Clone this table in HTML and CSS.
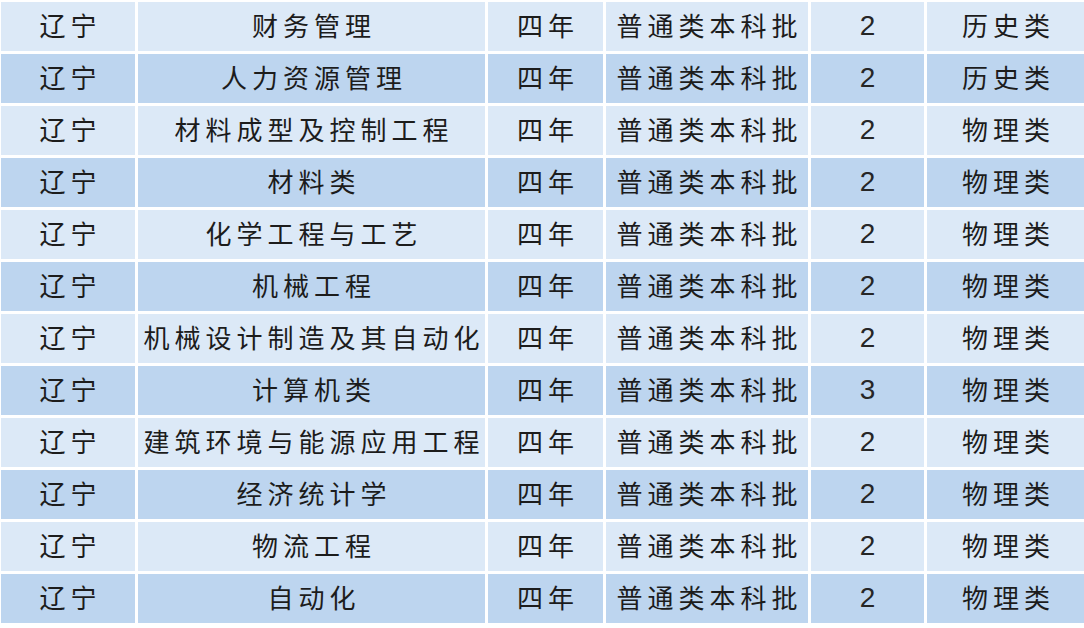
FILE: index.html
```html
<!DOCTYPE html>
<html lang="zh-CN">
<head>
<meta charset="utf-8">
<title>专业表</title>
<link rel="stylesheet" href="styles.css">
</head>
<body>
<div class="table">
  <div class="row light"><div class="cell">辽宁</div><div class="cell">财务管理</div><div class="cell">四年</div><div class="cell">普通类本科批</div><div class="cell num">2</div><div class="cell">历史类</div></div>
  <div class="row dark"><div class="cell">辽宁</div><div class="cell">人力资源管理</div><div class="cell">四年</div><div class="cell">普通类本科批</div><div class="cell num">2</div><div class="cell">历史类</div></div>
  <div class="row light"><div class="cell">辽宁</div><div class="cell">材料成型及控制工程</div><div class="cell">四年</div><div class="cell">普通类本科批</div><div class="cell num">2</div><div class="cell">物理类</div></div>
  <div class="row dark"><div class="cell">辽宁</div><div class="cell">材料类</div><div class="cell">四年</div><div class="cell">普通类本科批</div><div class="cell num">2</div><div class="cell">物理类</div></div>
  <div class="row light"><div class="cell">辽宁</div><div class="cell">化学工程与工艺</div><div class="cell">四年</div><div class="cell">普通类本科批</div><div class="cell num">2</div><div class="cell">物理类</div></div>
  <div class="row dark"><div class="cell">辽宁</div><div class="cell">机械工程</div><div class="cell">四年</div><div class="cell">普通类本科批</div><div class="cell num">2</div><div class="cell">物理类</div></div>
  <div class="row light"><div class="cell">辽宁</div><div class="cell">机械设计制造及其自动化</div><div class="cell">四年</div><div class="cell">普通类本科批</div><div class="cell num">2</div><div class="cell">物理类</div></div>
  <div class="row dark"><div class="cell">辽宁</div><div class="cell">计算机类</div><div class="cell">四年</div><div class="cell">普通类本科批</div><div class="cell num">3</div><div class="cell">物理类</div></div>
  <div class="row light"><div class="cell">辽宁</div><div class="cell">建筑环境与能源应用工程</div><div class="cell">四年</div><div class="cell">普通类本科批</div><div class="cell num">2</div><div class="cell">物理类</div></div>
  <div class="row dark"><div class="cell">辽宁</div><div class="cell">经济统计学</div><div class="cell">四年</div><div class="cell">普通类本科批</div><div class="cell num">2</div><div class="cell">物理类</div></div>
  <div class="row light"><div class="cell">辽宁</div><div class="cell">物流工程</div><div class="cell">四年</div><div class="cell">普通类本科批</div><div class="cell num">2</div><div class="cell">物理类</div></div>
  <div class="row dark"><div class="cell">辽宁</div><div class="cell">自动化</div><div class="cell">四年</div><div class="cell">普通类本科批</div><div class="cell num">2</div><div class="cell">物理类</div></div>
</div>
</body>
</html>
```
FILE: styles.css
```css
html, body {
  margin: 0;
  padding: 0;
  background: #ffffff;
}
body {
  width: 1084px;
  height: 628px;
  overflow: hidden;
}
.table {
  display: flex;
  flex-direction: column;
  gap: 3px;
  padding: 2px 2px 0 1px;
}
.row {
  display: grid;
  grid-template-columns: 134px 347px 115px 202px 113px 158px;
  column-gap: 3px;
  height: 49px;
}
.cell {
  display: flex;
  align-items: center;
  justify-content: center;
  padding-bottom: 4px;
  box-sizing: border-box;
  font-family: "Noto Sans CJK SC", "Noto Sans", sans-serif;
  font-size: 26px;
  letter-spacing: 5px;
  text-indent: 5px;
  color: #1c1c1c;
  white-space: nowrap;
  overflow: hidden;
}
.cell.num {
  font-family: "Liberation Sans", Arial, sans-serif;
  font-size: 28px;
  letter-spacing: 0;
  text-indent: 0;
  color: #262626;
  padding-bottom: 2px;
}
.light .cell {
  background: #dce9f7;
}
.dark .cell {
  background: #bdd5ef;
}
```
